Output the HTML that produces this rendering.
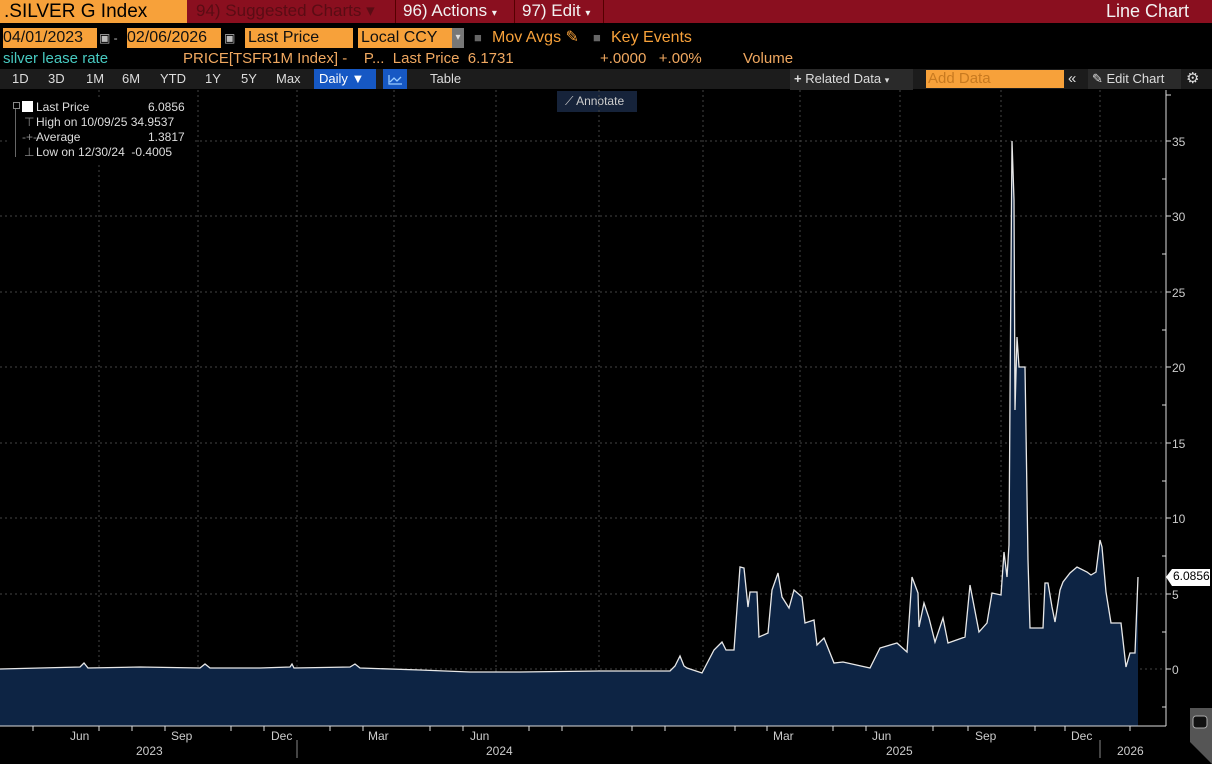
<html><head><style>
body{margin:0;width:1212px;height:764px;background:#000;overflow:hidden;font-family:"Liberation Sans",sans-serif;position:relative}
.a{position:absolute;white-space:nowrap}
.top{left:0;top:0;width:1212px;height:23px;background:#8a0f1f}
.o{background:#f7a13a}
.t{font-size:17px;color:#f2f2f2;top:0;line-height:22px}
.r2{top:28px;height:20px;line-height:20px;font-size:16px;color:#f7a13a}
.a.r2.o{color:#111}
.r3{top:49px;font-size:15px;line-height:20px;color:#f0a860}
.tb{top:69px;height:20px;left:0;width:1212px;background:#1c1c1c}
.tbt{top:69px;font-size:13px;line-height:20px;color:#ddd}
.yl{left:1172px;font-size:12px;color:#ccc}
.xl{font-size:12px;color:#ccc;top:729px}
</style></head><body>
<div class="a top"></div>
<div class="a o" style="left:0;top:0;width:187px;height:23px;font-size:19px;line-height:23px;padding-left:4px;box-sizing:border-box;color:#000">.SILVER G Index</div>
<div class="a t" style="left:196px;color:#5a0c14;font-size:17px">94) Suggested Charts ▾</div>
<div class="a" style="left:395px;top:0;width:1px;height:23px;background:#500"></div>
<div class="a t" style="left:403px">96) Actions <span style="font-size:10px">▾</span></div>
<div class="a" style="left:514px;top:0;width:1px;height:23px;background:#500"></div>
<div class="a t" style="left:522px">97) Edit <span style="font-size:10px">▾</span></div>
<div class="a" style="left:603px;top:0;width:1px;height:23px;background:#500"></div>
<div class="a t" style="left:1106px;font-size:18px">Line Chart</div>

<div class="a r2 o" style="left:3px;width:94px">04/01/2023</div>
<div class="a r2" style="left:99px;color:#bbb;font-size:12px">▣ -</div>
<div class="a r2 o" style="left:127px;width:94px">02/06/2026</div>
<div class="a r2" style="left:224px;color:#bbb;font-size:12px">▣</div>
<div class="a r2 o" style="left:245px;width:105px;padding-left:3px">Last Price</div>
<div class="a r2 o" style="left:358px;width:93px;padding-left:3px">Local CCY</div>
<div class="a r2" style="left:452px;width:12px;background:#777;color:#ddd;font-size:10px;text-align:center">▾</div>
<div class="a r2" style="left:474px;color:#666;font-size:13px">■</div>
<div class="a r2" style="left:492px">Mov Avgs ✎</div>
<div class="a r2" style="left:593px;color:#666;font-size:13px">■</div>
<div class="a r2" style="left:611px">Key Events</div>

<div class="a r3" style="left:3px;color:#47c9c0">silver lease rate</div>
<div class="a r3" style="left:183px">PRICE[TSFR1M Index] -&nbsp;&nbsp;&nbsp;&nbsp;P...&nbsp;&nbsp;Last Price&nbsp;&nbsp;6.1731</div>
<div class="a r3" style="left:600px">+.0000&nbsp;&nbsp;&nbsp;+.00%</div>
<div class="a r3" style="left:743px">Volume</div>

<div class="a tb"></div>
<div class="a tbt" style="left:12px">1D</div>
<div class="a tbt" style="left:48px">3D</div>
<div class="a tbt" style="left:86px">1M</div>
<div class="a tbt" style="left:122px">6M</div>
<div class="a tbt" style="left:160px">YTD</div>
<div class="a tbt" style="left:205px">1Y</div>
<div class="a tbt" style="left:241px">5Y</div>
<div class="a tbt" style="left:276px">Max</div>
<div class="a tbt" style="left:314px;width:62px;background:#1658c4;color:#fff;padding-left:5px;box-sizing:border-box">Daily ▼</div>
<div class="a" style="left:383px;top:69px;width:24px;height:20px;background:#1658c4"><svg width="24" height="20"><path d="M6 6v9h13M7 13l4-4 3 3 4-4" stroke="#9cf" fill="none" stroke-width="1.3"/></svg></div>
<div class="a tbt" style="left:430px">Table</div>
<div class="a tbt" style="left:790px;width:123px;background:#2a2a2a;padding-left:4px;box-sizing:border-box"><b>+</b> Related Data <span style="font-size:9px">▾</span></div>
<div class="a tbt o" style="left:926px;width:136px;height:18px;top:70px;line-height:18px;color:#c87a20;font-size:15px;padding-left:2px">Add Data</div>
<div class="a tbt" style="left:1068px;font-size:15px">«</div>
<div class="a tbt" style="left:1088px;width:93px;background:#2a2a2a;padding-left:4px;box-sizing:border-box">✎ Edit Chart</div>
<div class="a tbt" style="left:1186px;font-size:15px">⚙</div>

<div class="a" style="left:557px;top:91px;width:80px;height:21px;background:#16233a;color:#ccc;font-size:12px;line-height:21px;padding-left:8px;box-sizing:border-box">⟋ Annotate</div>

<svg class="a" style="left:0;top:0" width="1212" height="764">
<g stroke="#444" stroke-dasharray="2,3" stroke-width="1">
<path d="M99 90V726M198 90V726M297 90V726M394 90V726M496 90V726M599 90V726M703 90V726M800 90V726M900 90V726M1001 90V726M1100 90V726"/>
<path d="M0 669H1165M0 594H1165M0 518H1165M0 443H1165M0 367H1165M0 292H1165M0 216H1165M0 141H1165"/>
</g>
<path id="d" d="M0 669L40 668L80 667L84 663L88 668L140 667L200 668L205 664L210 668L260 668L290 667L292 664L294 668L350 667L355 664L360 668L420 670L470 672L520 672L600 671L670 671L675 666L680 656L684 666L687 668L702 673L714 650L722 642L726 650L734 650L740 567L744 568L748 607L750 592L757 592L759 637L768 633L772 590L778 573L782 597L789 608L794 590L802 597L805 623L814 620L817 645L824 638L834 663L843 662L870 668L880 648L897 643L907 652L912 577L918 593L919 627L924 603L929 618L935 642L943 618L948 643L965 637L970 585L979 632L987 623L992 593L1001 595L1004 552L1007 577L1009 545L1010 400L1012 141L1014 200L1015 410L1017 337L1019 367L1025 367L1028 560L1030 628L1043 628L1045 583L1048 583L1052 607L1055 622L1060 590L1063 582L1070 573L1077 567L1087 572L1091 575L1096 572L1100 540L1102 547L1106 592L1111 623L1121 623L1126 667L1130 653L1135 653L1138 577" fill="none"/>
<path d="M0 669L40 668L80 667L84 663L88 668L140 667L200 668L205 664L210 668L260 668L290 667L292 664L294 668L350 667L355 664L360 668L420 670L470 672L520 672L600 671L670 671L675 666L680 656L684 666L687 668L702 673L714 650L722 642L726 650L734 650L740 567L744 568L748 607L750 592L757 592L759 637L768 633L772 590L778 573L782 597L789 608L794 590L802 597L805 623L814 620L817 645L824 638L834 663L843 662L870 668L880 648L897 643L907 652L912 577L918 593L919 627L924 603L929 618L935 642L943 618L948 643L965 637L970 585L979 632L987 623L992 593L1001 595L1004 552L1007 577L1009 545L1010 400L1012 141L1014 200L1015 410L1017 337L1019 367L1025 367L1028 560L1030 628L1043 628L1045 583L1048 583L1052 607L1055 622L1060 590L1063 582L1070 573L1077 567L1087 572L1091 575L1096 572L1100 540L1102 547L1106 592L1111 623L1121 623L1126 667L1130 653L1135 653L1138 577V726H0Z" fill="#0d2444"/>
<use href="#d" stroke="#e8e8e8" stroke-width="1.3"/>
<path d="M1166 90V726M0 726H1166" stroke="#ddd" stroke-width="1"/>
<g stroke="#ddd"><path d="M1166 669h5M1166 594h5M1166 518h5M1166 443h5M1166 367h5M1166 292h5M1166 216h5M1166 141h5M1166 95h5M1166 632h-4M1166 556h-4M1166 481h-4M1166 405h-4M1166 330h-4M1166 254h-4M1166 179h-4M1166 707h-4"/>
<path d="M33 726v5M99 726v5M132 726v5M165 726v5M231 726v5M264 726v5M330 726v5M363 726v5M430 726v5M463 726v5M529 726v5M562 726v5M632 726v5M665 726v5M735 726v5M767 726v5M833 726v5M866 726v5M933 726v5M968 726v5M1035 726v5M1065 726v5M1130 726v5"/>
<path d="M297 740v18M1100 740v18" stroke="#888"/></g>
<path d="M1166 577l6-8h38v17h-38z" fill="#fff"/>
<path d="M1190 708h22v56l-22-22z" fill="#555"/>
<rect x="1193" y="716" width="14" height="12" rx="3" fill="#111" stroke="#aaa"/>
</svg>
<div class="a" style="left:1173px;top:569px;font-size:12px;color:#000">6.0856</div>
<div class="a yl" style="top:135px">35</div><div class="a yl" style="top:210px">30</div><div class="a yl" style="top:286px">25</div><div class="a yl" style="top:361px">20</div><div class="a yl" style="top:437px">15</div><div class="a yl" style="top:512px">10</div><div class="a yl" style="top:588px">5</div><div class="a yl" style="top:663px">0</div>
<div class="a xl" style="left:70px">Jun</div><div class="a xl" style="left:171px">Sep</div><div class="a xl" style="left:271px">Dec</div><div class="a xl" style="left:368px">Mar</div><div class="a xl" style="left:470px">Jun</div><div class="a xl" style="left:773px">Mar</div><div class="a xl" style="left:872px">Jun</div><div class="a xl" style="left:975px">Sep</div><div class="a xl" style="left:1071px">Dec</div>
<div class="a xl" style="left:136px;top:744px">2023</div><div class="a xl" style="left:486px;top:744px">2024</div><div class="a xl" style="left:886px;top:744px">2025</div><div class="a xl" style="left:1117px;top:744px">2026</div>

<div class="a" style="left:8px;top:98px;width:186px;height:65px;background:#000;font-size:12px;color:#ddd;line-height:15px">
<div class="a" style="left:14px;top:3px;width:11px;height:11px;background:#fff"></div>
<div class="a" style="left:5px;top:4px;width:5px;height:5px;border:1px solid #888"></div>
<div class="a" style="left:7px;top:11px;width:1px;height:48px;background:#666"></div>
<div class="a" style="left:28px;top:2px">Last Price</div><div class="a" style="left:140px;top:2px">6.0856</div>
<div class="a" style="left:16px;top:17px;color:#888">⊤</div><div class="a" style="left:28px;top:17px">High on 10/09/25 34.9537</div>
<div class="a" style="left:14px;top:32px;color:#888">-+-</div><div class="a" style="left:28px;top:32px">Average</div><div class="a" style="left:140px;top:32px">1.3817</div>
<div class="a" style="left:16px;top:47px;color:#888">⊥</div><div class="a" style="left:28px;top:47px">Low on 12/30/24&nbsp;&nbsp;-0.4005</div>
</div>
</body></html>
